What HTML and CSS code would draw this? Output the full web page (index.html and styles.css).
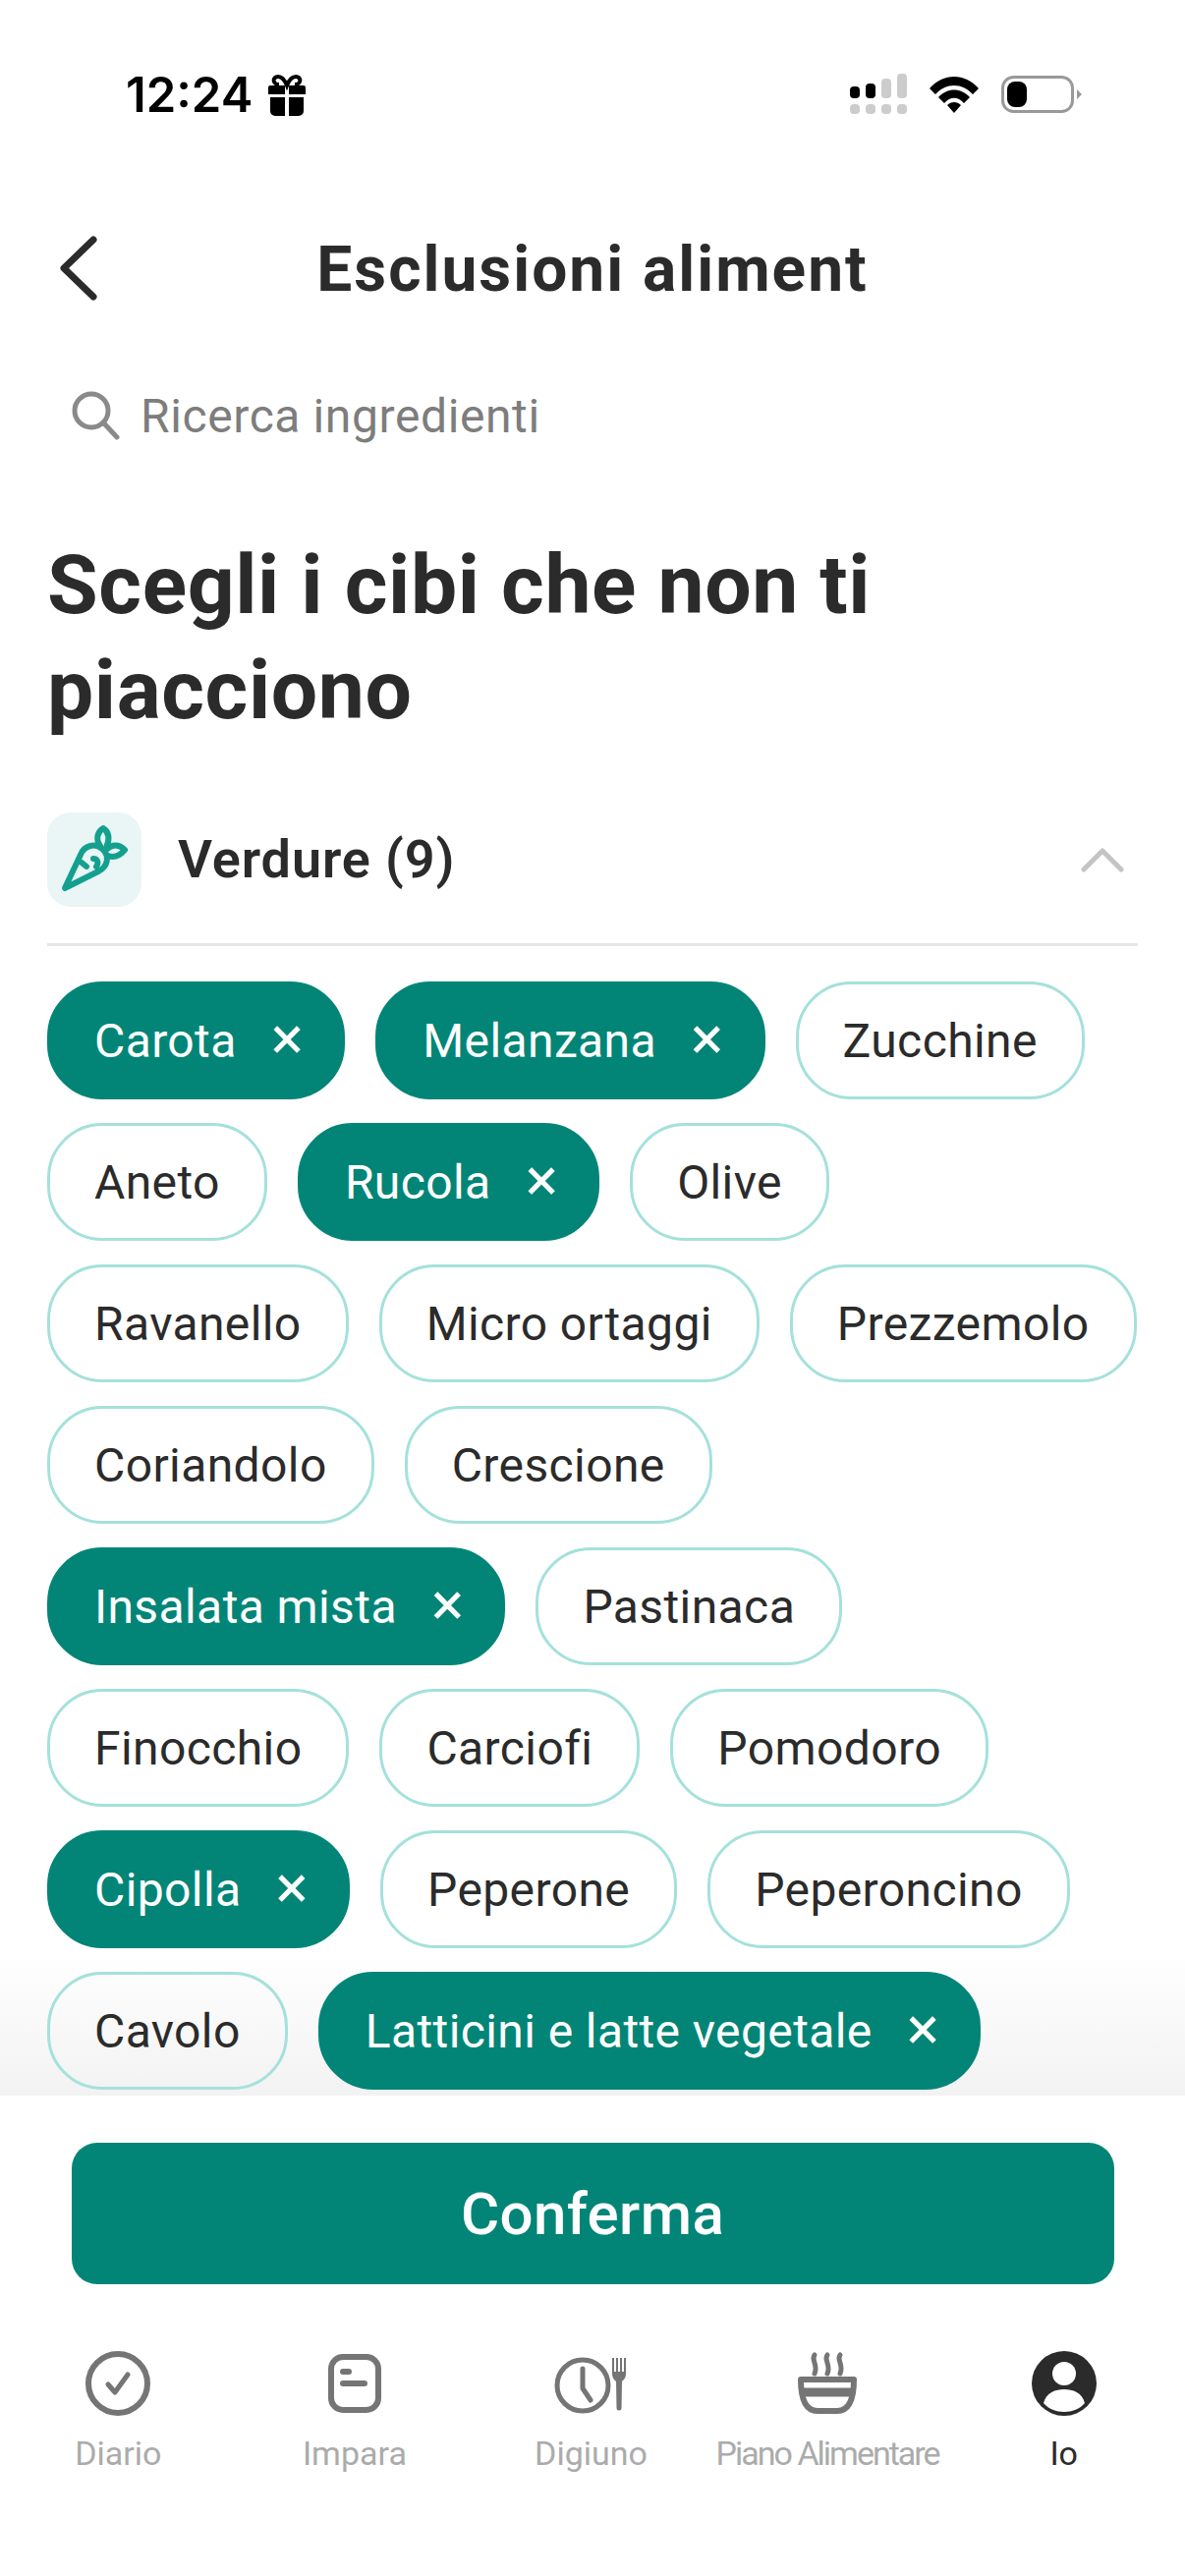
FILE: index.html
```html
<!DOCTYPE html>
<html lang="it">
<head>
  <meta charset="UTF-8" />
  <meta name="viewport" content="width=device-width, initial-scale=1.0" />
  <title>Esclusioni alimentari</title>
  <link rel="stylesheet" href="styles.css">
</head>
<body>
  <div class="page">
    <!-- Status bar -->
    <div class="status-bar">
      <div class="status-left">
        <span class="time">12:24</span>
        <svg class="gift" viewBox="0 0 38 42" width="38" height="42">
          <path d="M11 10 C4 10 4 2 10 2 C14 2 17 6 19 11 C21 6 24 2 28 2 C34 2 34 10 27 10" fill="none" stroke="#000" stroke-width="4"/>
          <path d="M0 13 a2 2 0 0 1 2-2 h15 v9 H0z M21 11 h15 a2 2 0 0 1 2 2 v7 H21z M2 23 h15 v19 H7 a5 5 0 0 1-5-5z M21 23 h15 v14 a5 5 0 0 1-5 5 H21z" fill="#000"/>
        </svg>
      </div>
      <div class="status-right">
        <svg viewBox="0 0 58 42" width="58" height="42">
          <rect x="0" y="13" width="10" height="12" rx="4" fill="#000"/>
          <rect x="16" y="10" width="10" height="15" rx="4" fill="#000"/>
          <rect x="32" y="5" width="10" height="20" rx="4" fill="#ccc"/>
          <rect x="48" y="0" width="10" height="25" rx="4" fill="#ccc"/>
          <rect x="0" y="31" width="10" height="10" rx="4" fill="#ccc"/>
          <rect x="16" y="31" width="10" height="10" rx="4" fill="#ccc"/>
          <rect x="32" y="31" width="10" height="10" rx="4" fill="#ccc"/>
          <rect x="48" y="31" width="10" height="10" rx="4" fill="#ccc"/>
        </svg>
        <svg viewBox="0 0 50 38" width="50" height="38">
          <path d="M0 13 C14 -3 36 -3 50 13 L44 19 C33 7 17 7 6 19z" fill="#000"/>
          <path d="M9 22 C18 12 32 12 41 22 L35 28 C29 21 21 21 15 28z" fill="#000"/>
          <path d="M18 30 C22 26 28 26 32 30 L25 38z" fill="#000"/>
        </svg>
        <svg viewBox="0 0 82 38" width="82" height="38">
          <rect x="1.5" y="1.5" width="71" height="35" rx="11" fill="none" stroke="#999" stroke-width="3"/>
          <rect x="6" y="6" width="20" height="26" rx="8" fill="#000"/>
          <path d="M77 14 L82 19 L77 24z" fill="#999"/>
        </svg>
      </div>
    </div>

    <!-- Header -->
    <div class="nav">
      <svg class="back" viewBox="0 0 40 66" width="40" height="66">
        <path d="M35 4 L5 33 L35 62" fill="none" stroke="#2b2b2b" stroke-width="7" stroke-linecap="round" stroke-linejoin="round"/>
      </svg>
      <h2 class="nav-title">Esclusioni aliment</h2>
    </div>

    <div class="search">
      <svg viewBox="0 0 50 50" width="50" height="50">
        <circle cx="21" cy="20" r="17" fill="none" stroke="#8a8a8a" stroke-width="5"/>
        <path d="M33 32 L47 47" stroke="#8a8a8a" stroke-width="5" stroke-linecap="round"/>
      </svg>
      <span>Ricerca ingredienti</span>
    </div>

    <h1 class="heading">Scegli i cibi che non ti piacciono</h1>

    <div class="section">
      <div class="section-head">
        <div class="section-icon">
          <svg viewBox="0 0 96 96" width="96" height="96">
            <g fill="none" stroke="#14a08e" stroke-width="6" stroke-linecap="round" stroke-linejoin="round">
              <path d="M18 77 L34 43 C38 33 49 31 56 37 C64 44 62 55 52 60z"/>
              <path d="M54 34 C49 27 51 20 57 16 C63 20 64 27 60 36"/>
              <path d="M60 38 C66 32 73 32 79 38 C73 45 67 46 62 44"/>
              <path d="M35 51 L40 55"/>
              <path d="M47 47 C51 47 53 51 50 55"/>
            </g>
          </svg>
        </div>
        <span class="section-title">Verdure (9)</span>
        <svg class="collapse" viewBox="0 0 44 26" width="44" height="26">
          <path d="M3 23 L22 4 L41 23" fill="none" stroke="#c4c4c4" stroke-width="5" stroke-linecap="round" stroke-linejoin="round"/>
        </svg>
      </div>

      <div class="chips">
        <div class="chip on">Carota<i>×</i></div>
        <div class="chip on">Melanzana<i>×</i></div>
        <div class="chip">Zucchine</div>
        <div class="chip">Aneto</div>
        <div class="chip on">Rucola<i>×</i></div>
        <div class="chip">Olive</div>
        <div class="chip">Ravanello</div>
        <div class="chip">Micro ortaggi</div>
        <div class="chip">Prezzemolo</div>
        <div class="chip">Coriandolo</div>
        <div class="chip">Crescione</div>
        <div class="chip on">Insalata mista<i>×</i></div>
        <div class="chip">Pastinaca</div>
        <div class="chip">Finocchio</div>
        <div class="chip">Carciofi</div>
        <div class="chip">Pomodoro</div>
        <div class="chip on">Cipolla<i>×</i></div>
        <div class="chip">Peperone</div>
        <div class="chip">Peperoncino</div>
        <div class="chip">Cavolo</div>
        <div class="chip on">Latticini e latte vegetale<i>×</i></div>
      </div>
    </div>

    <!-- Bottom -->
    <div class="bottom">
      <div class="fade"></div>
      <button class="confirm">Conferma</button>
      <div class="tabs">
        <div class="tab">
          <svg viewBox="0 0 80 80" width="80" height="80">
            <circle cx="40" cy="40" r="30" fill="none" stroke="#757575" stroke-width="6"/>
            <path d="M30 41 L37 49 L50 31" fill="none" stroke="#757575" stroke-width="5" stroke-linecap="round" stroke-linejoin="round"/>
          </svg>
          <span>Diario</span>
        </div>
        <div class="tab">
          <svg viewBox="0 0 80 80" width="80" height="80">
            <rect x="16" y="13" width="48" height="54" rx="12" fill="none" stroke="#757575" stroke-width="6"/>
            <path d="M28 28 H34 M28 40 H50" stroke="#757575" stroke-width="6" stroke-linecap="round"/>
          </svg>
          <span>Impara</span>
        </div>
        <div class="tab">
          <svg viewBox="0 0 80 80" width="80" height="80">
            <circle cx="32" cy="42" r="26" fill="none" stroke="#757575" stroke-width="5"/>
            <path d="M32 25 V45 L40 57" fill="none" stroke="#757575" stroke-width="5" stroke-linecap="round" stroke-linejoin="round"/>
            <path d="M62 14 H64 V28 H66 V14 H68 V28 H70 V14 H72 V28 H74 V14 H76 V30 C76 35 73 37 72 38 L71.5 65 A2.5 2.5 0 0 1 66.5 65 L66 38 C65 37 62 35 62 30z" fill="#757575"/>
          </svg>
          <span>Digiuno</span>
        </div>
        <div class="tab">
          <svg viewBox="0 0 80 80" width="80" height="80">
            <path d="M27 11 C23 16 31 21 27 30 M40 11 C36 16 44 21 40 30 M53 11 C49 16 57 21 53 30" fill="none" stroke="#757575" stroke-width="5" stroke-linecap="round"/>
            <path d="M13 36 H67 C67 55 63 68 50 68 H30 C17 68 13 55 13 36z" fill="none" stroke="#757575" stroke-width="6" stroke-linejoin="round"/>
            <path d="M14 49 H66" stroke="#757575" stroke-width="9"/>
          </svg>
          <span class="tight">Piano Alimentare</span>
        </div>
        <div class="tab active">
          <svg viewBox="0 0 80 80" width="80" height="80">
            <circle cx="40" cy="40" r="33" fill="#2b2b2b"/>
            <circle cx="40" cy="30" r="12" fill="#fff"/>
            <path d="M19 60 C22 49 31 46 40 46 C49 46 58 49 61 60 C56 66 48 69 40 69 C32 69 24 66 19 60z" fill="#fff"/>
          </svg>
          <span>Io</span>
        </div>
      </div>
    </div>
  </div>
</body>
</html>
```

FILE: styles.css
```css
* {
  margin: 0;
  padding: 0;
  box-sizing: border-box;
}

body {
  font-family: 'Roboto', 'Noto Sans', sans-serif;
  background: #fff;
  color: #2b2b2b;
}

.page {
  width: 1206px;
  height: 2622px;
  overflow: hidden;
  display: flex;
  flex-direction: column;
}

.status-bar {
  height: 222px;
  padding: 75px 105px 0 128px;
  display: flex;
  justify-content: space-between;
  align-items: flex-start;
  flex-shrink: 0;
}

.status-left {
  display: flex;
  align-items: center;
  gap: 16px;
}

.time {
  font-family: 'Inter', sans-serif;
  font-size: 49px;
  font-weight: 600;
  line-height: 44px;
  color: #000;
}

.status-right {
  display: flex;
  align-items: center;
  gap: 23px;
}

.nav {
  height: 100px;
  position: relative;
  display: flex;
  justify-content: center;
  align-items: center;
  flex-shrink: 0;
}

.back {
  position: absolute;
  left: 60px;
  top: 18px;
}

.nav-title {
  padding-top: 5px;
  font-size: 64px;
  font-weight: 700;
  line-height: 100px;
  letter-spacing: 2px;
}

.search {
  height: 80px;
  margin-top: 61px;
  padding-left: 72px;
  display: flex;
  align-items: center;
  gap: 21px;
  font-size: 48px;
  letter-spacing: 0.6px;
  color: #7d7d7d;
  flex-shrink: 0;
}

.heading {
  margin-top: 79px;
  padding: 0 48px;
  width: 1000px;
  font-size: 84px;
  font-weight: 700;
  line-height: 107px;
  letter-spacing: 0.6px;
  flex-shrink: 0;
}

.section {
  margin: 72px 48px 0;
  flex: 1;
  min-height: 0;
}

.section-head {
  height: 135px;
  padding-bottom: 39px;
  border-bottom: 3px solid #e6e6e6;
  display: flex;
  align-items: center;
  gap: 37px;
}

.section-icon {
  width: 96px;
  height: 96px;
  background: #e9f6f5;
  border-radius: 24px;
}

.section-title {
  flex: 1;
  font-size: 54px;
  font-weight: 600;
  letter-spacing: 0.9px;
}

.collapse {
  margin-right: 14px;
}

.chips {
  position: relative;
  z-index: 1;
  margin-top: 36px;
  display: flex;
  flex-wrap: wrap;
  gap: 24px 31px;
}

.chip {
  height: 120px;
  padding: 0 45px;
  border: 3px solid #a5e1db;
  border-radius: 56px;
  display: flex;
  align-items: center;
  font-size: 48px;
  letter-spacing: 0.4px;
  white-space: nowrap;
}

.chip.on {
  background: #028577;
  border-color: #028577;
  color: #fff;
}

.chip i {
  margin: 0 -6px 6px 35px;
  font-style: normal;
  font-size: 62px;
  font-weight: 400;
}

.bottom {
  height: 489px;
  position: relative;
  background: #fff;
  flex-shrink: 0;
  padding-top: 48px;
}

.fade {
  position: absolute;
  left: 0;
  right: 0;
  top: -145px;
  height: 145px;
  background: linear-gradient(rgba(240, 240, 240, 0), rgba(240, 240, 240, 0.85));
  pointer-events: none;
}

.confirm {
  display: block;
  width: 1061px;
  height: 144px;
  margin: 0 auto;
  background: #028577;
  color: #fff;
  border: none;
  border-radius: 26px;
  font-family: inherit;
  font-size: 60px;
  font-weight: 500;
  letter-spacing: 0.4px;
}

.tabs {
  margin-top: 61px;
  padding-right: 3px;
  display: grid;
  grid-template-columns: repeat(5, minmax(0, 1fr));
}

.tab {
  display: flex;
  flex-direction: column;
  align-items: center;
  font-size: 34px;
  color: #ababab;
  white-space: nowrap;
}

.tab span {
  margin-top: 9px;
  line-height: 44px;
}

.tab .tight {
  letter-spacing: -2px;
}

.tab.active {
  color: #2b2b2b;
}
```
